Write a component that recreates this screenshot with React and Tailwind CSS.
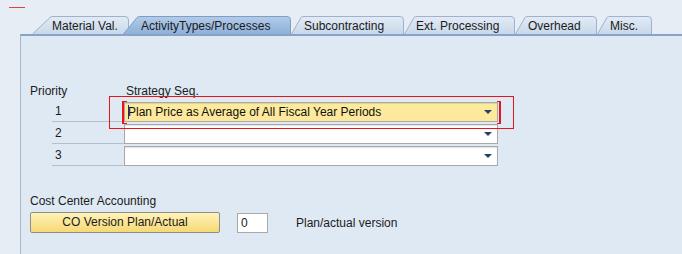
import React from "react";

const TABS = [
  { label: "Material Val.", w: 97, slant: 18, pl: 20 },
  { label: "ActivityTypes/Processes", w: 168, slant: 14, pl: 18, active: true, ml: -6 },
  { label: "Subcontracting", w: 113, slant: 10, pl: 13 },
  { label: "Ext. Processing", w: 111, slant: 10, pl: 12 },
  { label: "Overhead", w: 82, slant: 10, pl: 13 },
  { label: "Misc.", w: 55, slant: 10, pl: 13 },
];

function Tab({ label, w, slant, pl, active, ml = 0 }) {
  const h = 18;
  const d = `M0.5,${h} L${slant},1.5 Q${slant + 1},0.5 ${slant + 3},0.5 L${w - 4},0.5 Q${w - 0.5},0.5 ${w - 0.5},4 L${w - 0.5},${h}`;
  const id = active ? "tabActive" : "tabIdle";
  return (
    <div
      className={`relative h-[18px] shrink-0 ${active ? "z-10" : ""}`}
      style={{ width: w, marginLeft: ml }}
    >
      <svg className="absolute inset-0" width={w} height={h}>
        <path d={d + " Z"} fill={`url(#${id})`} />
        <path d={d} fill="none" stroke={active ? "#7f9ec6" : "#9db3cd"} strokeWidth="1" />
      </svg>
      <span
        className="relative block leading-[18px] pt-[1px] text-[#1b1b1b] whitespace-nowrap"
        style={{ paddingLeft: pl }}
      >
        {label}
      </span>
    </div>
  );
}

function Arrow() {
  return (
    <div className="w-0 h-0 border-l-[4px] border-r-[4px] border-t-[4px] border-l-transparent border-r-transparent border-t-[#26406b]" />
  );
}

function DropField({ value, yellow }) {
  return (
    <div
      className={`flex items-center h-[20px] w-[374px] border border-[#a9a9a9] shadow-[inset_0_1px_1px_rgba(0,0,0,0.12)] pl-[3px] pr-[5px] ${
        yellow ? "bg-gradient-to-b from-[#fdec9e] to-[#fde79a]" : "bg-white"
      }`}
    >
      <span className="flex-1 text-[#111] whitespace-nowrap leading-[18px]">{value}</span>
      <Arrow />
    </div>
  );
}

export default function App() {
  const rows = [
    { n: "1", value: "Plan Price as Average of All Fiscal Year Periods", yellow: true },
    { n: "2", value: "" },
    { n: "3", value: "" },
  ];

  return (
    <div
      className="w-[682px] h-[254px] overflow-hidden bg-[#e6edf5] text-[12px] text-[#1b1b1b]"
      style={{ fontFamily: '"Liberation Sans", Arial, sans-serif' }}
    >
      <svg width="0" height="0" className="absolute">
        <defs>
          <linearGradient id="tabIdle" x1="0" y1="0" x2="0" y2="1">
            <stop offset="0" stopColor="#e3ebf5" />
            <stop offset="1" stopColor="#c8d8ea" />
          </linearGradient>
          <linearGradient id="tabActive" x1="0" y1="0" x2="0" y2="1">
            <stop offset="0" stopColor="#b2cbe8" />
            <stop offset="1" stopColor="#8eb0d9" />
          </linearGradient>
        </defs>
      </svg>

      {/* red marker */}
      <div className="pt-[7px] pl-[9px] h-[16px]">
        <div className="w-[16px] h-[1px] bg-[#e8413c]" />
      </div>

      {/* tabs */}
      <div className="flex ml-[32px] h-[18px]">
        {TABS.map((t) => (
          <Tab key={t.label} {...t} />
        ))}
      </div>

      {/* panel */}
      <div className="ml-[20px] h-[220px] bg-[#dfe9f4] border-t-2 border-t-[#87a4c8] border-l border-l-[#a3b8cf]">
        <div className="relative pl-[9px] pt-[48px]">
          <div className="flex h-[14px] items-center">
            <span className="w-[96px]">Priority</span>
            <span>Strategy Seq.</span>
          </div>

          <div className="mt-[4px] flex flex-col gap-[2px]">
            {rows.map((r) => (
              <div key={r.n} className="flex items-center">
                <div className="ml-[22px] w-[72px] h-[20px] border-b border-[#b5bfca] pl-[3px] leading-[19px]">
                  {r.n}
                </div>
                <DropField value={r.value} yellow={r.yellow} />
              </div>
            ))}
          </div>

          {/* highlight annotation */}
          <div className="absolute left-[88px] top-[60px] w-[405px] h-[33px] border border-[#e8141a]" />
          <div className="absolute left-[101px] top-[65px] w-[5px] h-[23px] border-l-2 border-t border-b border-[#e8141a]" />
          <div className="absolute left-[476px] top-[65px] w-[4px] h-[23px] border-r-2 border-t border-b border-[#e8141a]" />
          <div className="absolute left-[107px] top-[69px] w-[1px] h-[14px] bg-[#1a2f8a]" />

          <div className="mt-[28px] h-[14px] leading-[14px]">Cost Center Accounting</div>

          <div className="mt-[4px] flex items-center">
            <button className="w-[190px] h-[21px] rounded-[2px] border border-[#8e8e8e] bg-gradient-to-b from-[#fff3b8] to-[#f7d873] text-[#1b1b1b] text-[12px] leading-[19px]">
              CO Version Plan/Actual
            </button>
            <div className="ml-[17px] w-[31px] h-[20px] bg-white border border-[#a9a9a9] pl-[3px] leading-[18px]">
              0
            </div>
            <span className="ml-[28px]">Plan/actual version</span>
          </div>
        </div>
      </div>
    </div>
  );
}
